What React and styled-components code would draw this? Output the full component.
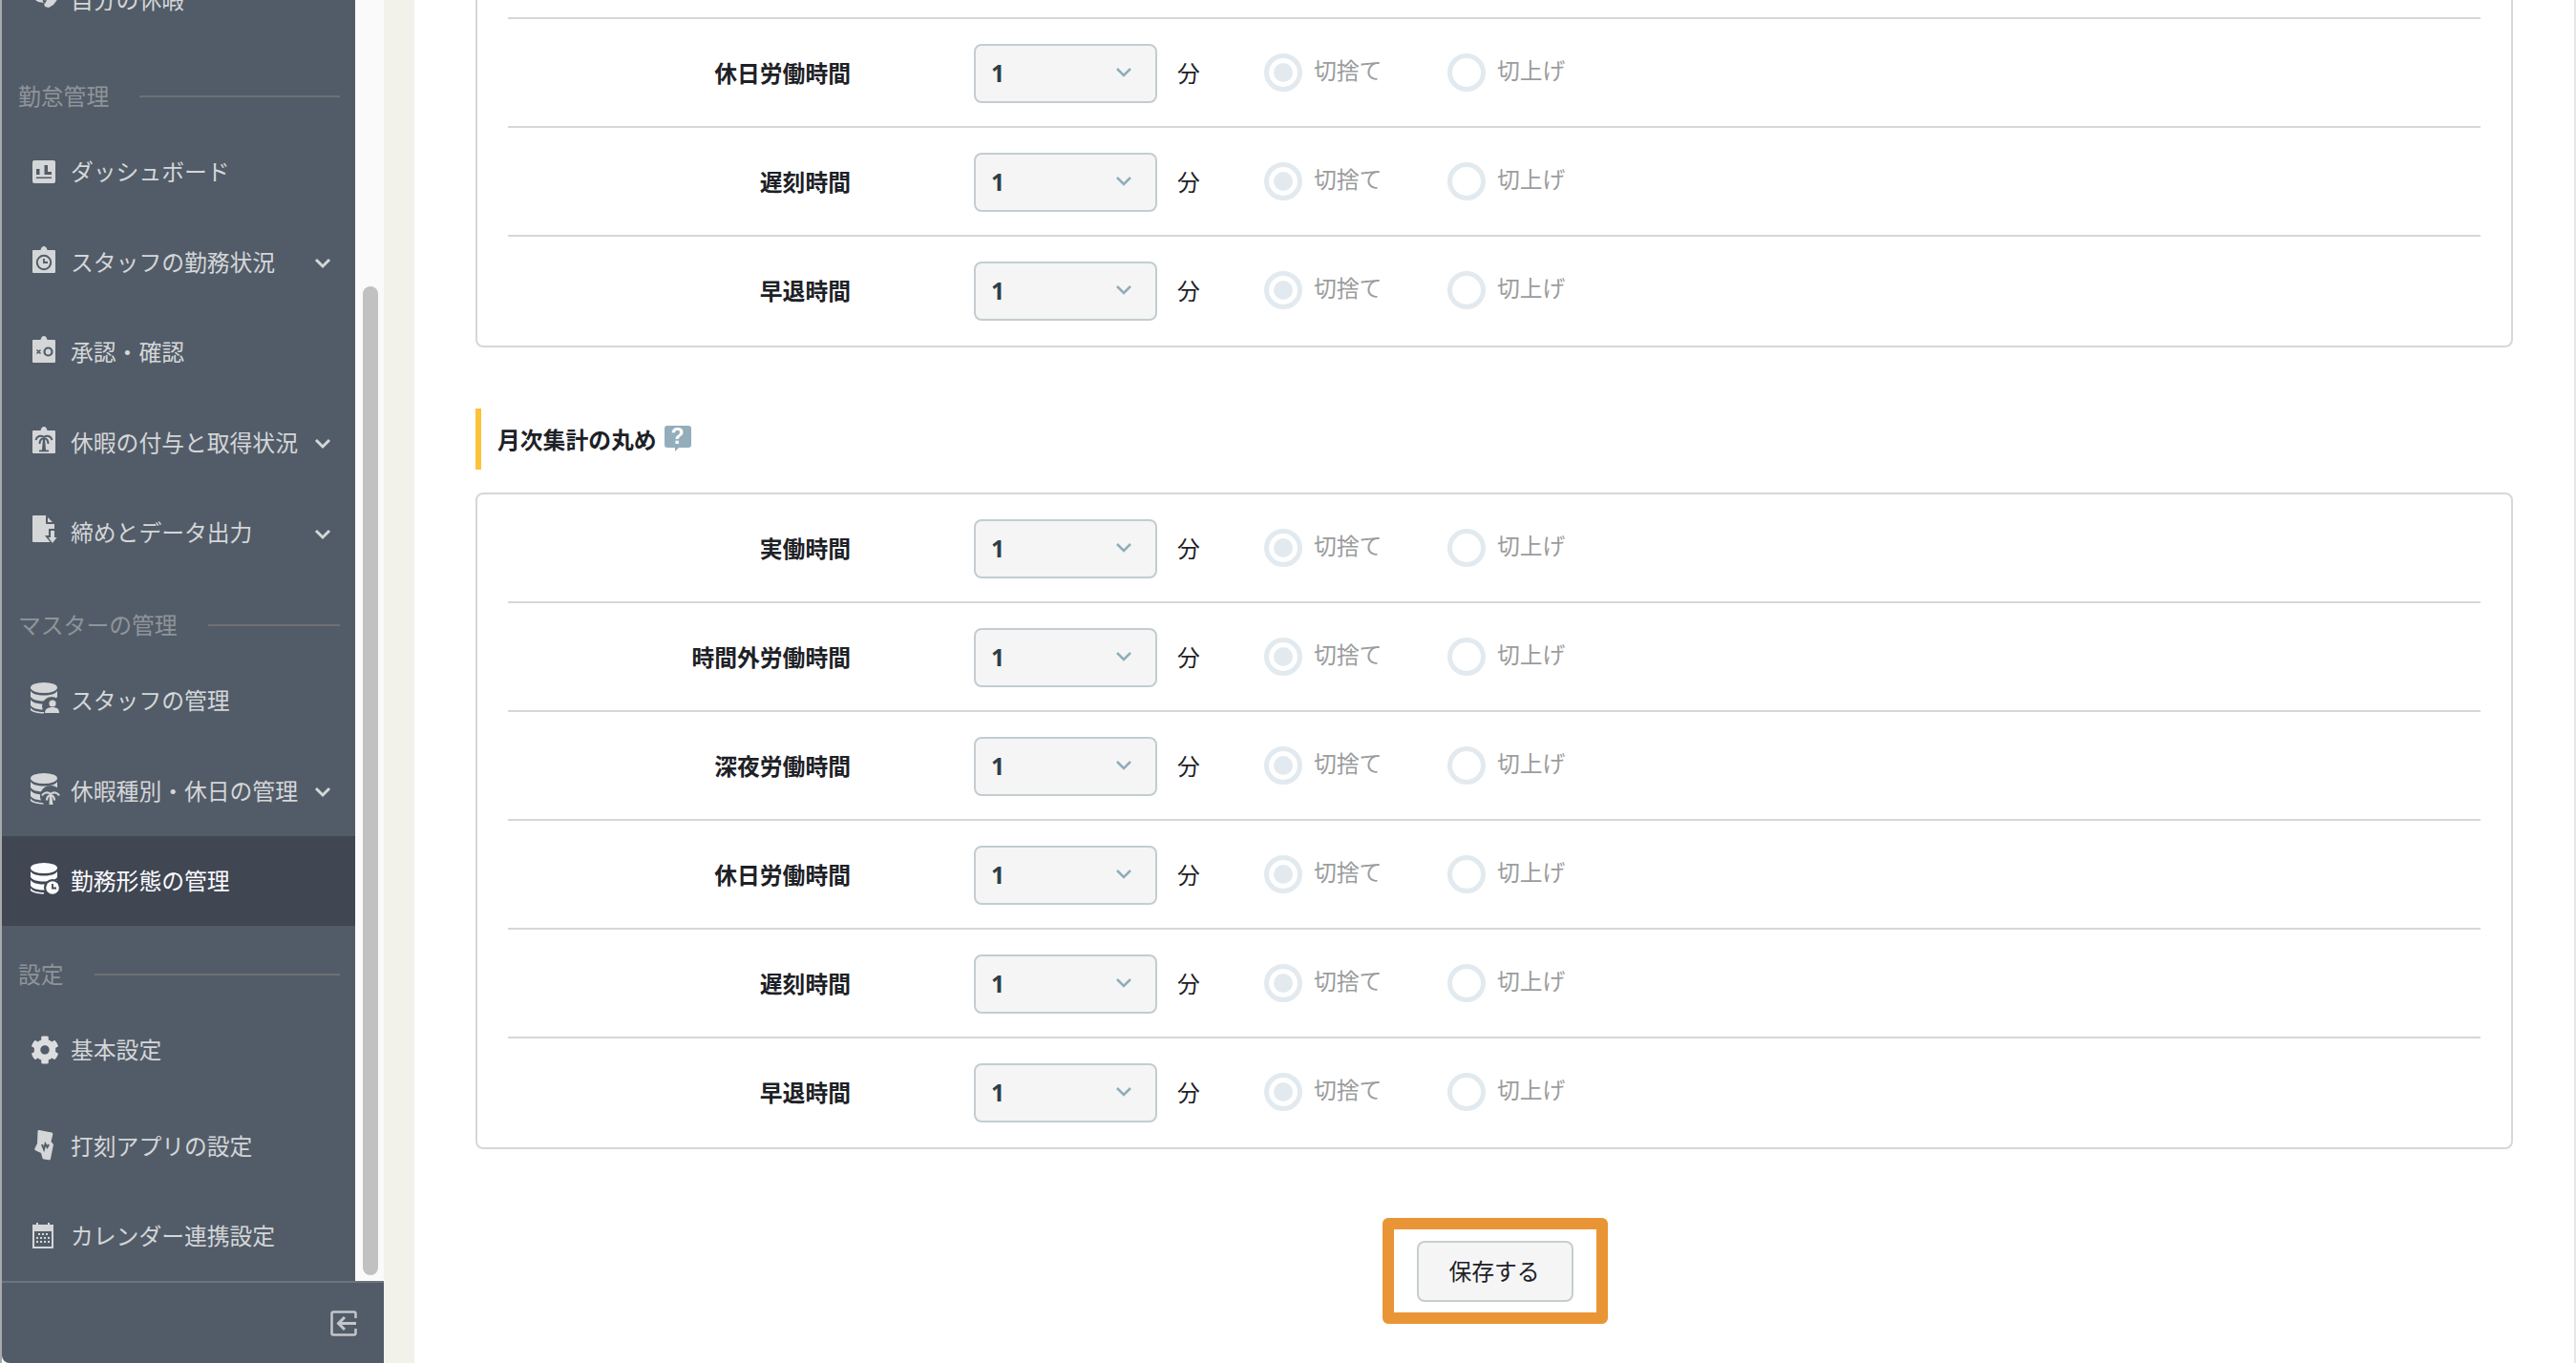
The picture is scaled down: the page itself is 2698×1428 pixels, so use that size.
import React from "react";
import styled, { createGlobalStyle } from "styled-components";
import { FaCog } from "react-icons/fa";

const Global = createGlobalStyle`
  html, body { margin: 0; padding: 0; background: #fff; overflow: hidden; }
  #root { width: 2698px; height: 1428px; }
  * { box-sizing: border-box; }
`;

const FONT = `"Noto Sans CJK JP", "Noto Sans", sans-serif`;

const Page = styled.div`
  display: flex;
  width: 2698px;
  height: 1428px;
  overflow: hidden;
  background: #fff;
  font-family: ${FONT};
  font-size: 23.8px;
`;
const Sidebar = styled.aside`
  width: 402px;
  flex: none;
  display: flex;
  flex-direction: column;
  border-left: 2px solid #a9abab;
  background: #fafafa;
`;
const SideBody = styled.div`
  flex: 1;
  min-height: 0;
  display: flex;
`;
const Nav = styled.nav`
  width: 370px;
  flex: none;
  background: #525c68;
  overflow: hidden;
  color: #d4d6d8;
`;
const NavInner = styled.div`
  margin-top: -47px;
`;
const Track = styled.div`
  flex: 1;
  padding: 300px 6px 6px 8px;
`;
const Thumb = styled.div`
  width: 16px;
  height: 1036px;
  border-radius: 8px;
  background: #c1c1c1;
`;
const SideFoot = styled.div`
  height: 86px;
  flex: none;
  display: flex;
  align-items: center;
  justify-content: flex-end;
  padding: 2px 28px 0 0;
  background: #525c68;
  border-top: 2px solid #6c747e;
  border-bottom-left-radius: 8px;
`;
const SectionHead = styled.div`
  display: flex;
  align-items: center;
  gap: 32px;
  height: 30px;
  margin: ${(p) => p.$top}px 16px ${(p) => p.$bottom}px 17px;
  color: #8f9499;
  white-space: nowrap;
  &::after {
    content: "";
    flex: 1;
    height: 2px;
    background: #6d7074;
  }
`;
const SectionText = styled.span`
  margin-top: -3px;
`;
const Item = styled.div`
  display: flex;
  align-items: center;
  gap: 12px;
  height: ${(p) => p.$h || 94.5}px;
  padding: 0 25px 0 30px;
  white-space: nowrap;
  background: ${(p) => (p.$active ? "#404652" : "transparent")};
  color: ${(p) => (p.$active ? "#fbfbff" : "inherit")};
`;
const NavIcon = styled.svg`
  width: 30px;
  height: 34px;
  flex: none;
  overflow: visible;
`;
const GearIcon = styled(FaCog)`
  width: 30px;
  height: 30px;
  flex: none;
  color: #dcdddf;
`;
const ItemText = styled.span`
  flex: 1;
  margin-top: -3px;
`;
const Chevron = styled.svg`
  width: 18px;
  height: 12px;
  flex: none;
  margin-top: 3px;
`;
const Gutter = styled.div`
  width: 32px;
  flex: none;
  background: #f2f2ea;
`;
const Main = styled.main`
  flex: 1;
  min-width: 0;
  padding: 0 64px;
  border-right: 2px solid #e6e6e6;
  background: #fff;
`;
const MainInner = styled.div`
  margin-top: -96px;
`;
const Card = styled.section`
  border: 2px solid #d7d7d7;
  border-radius: 8px;
  padding: 0 32px;
`;
const Heading = styled.h3`
  display: flex;
  align-items: center;
  gap: 8px;
  height: 64px;
  margin: 64px 0 24px;
  padding-left: 17px;
  border-left: 6px solid #fdc23a;
  font-size: 23.8px;
  font-weight: 700;
  color: #1d2126;
`;
const HeadingText = styled.span`
  margin-top: -2px;
`;
const HelpBubble = styled.span`
  position: relative;
  display: flex;
  align-items: center;
  justify-content: center;
  width: 28px;
  height: 23px;
  margin-top: -5px;
  border-radius: 3px;
  background: #93adbb;
  color: #fff;
  font-family: "Liberation Sans", sans-serif;
  font-size: 23px;
  font-weight: 700;
  &::after {
    content: "";
    position: absolute;
    left: 11px;
    top: 22px;
    border-style: solid;
    border-width: 5px 5px 0 0;
    border-color: #93adbb transparent transparent transparent;
  }
`;
const Row = styled.div`
  display: flex;
  align-items: center;
  height: 114px;
  padding-top: 2px;
  border-bottom: 2px solid ${(p) => (p.$last ? "transparent" : "#d7d7d7")};
`;
const RowLabel = styled.div`
  width: 359px;
  flex: none;
  margin: -3px 129px 0 0;
  text-align: right;
  font-weight: 700;
  color: #1d2126;
  white-space: nowrap;
`;
const SelectBox = styled.div`
  width: 192px;
  height: 62px;
  flex: none;
  display: flex;
  align-items: center;
  justify-content: space-between;
  padding: 0 25px 0 16px;
  border: 2px solid #c3cdd1;
  border-radius: 8px;
  background: #f5f5f5;
  color: #2f3e4a;
  font-family: "Open Sans", sans-serif;
  font-size: 25px;
  font-weight: 700;
`;
const SelectValue = styled.span`
  margin-top: -2px;
`;
const SelectArrow = styled.svg`
  width: 16px;
  height: 10px;
  margin-top: -2px;
`;
const Unit = styled.span`
  width: 24px;
  flex: none;
  margin: -3px 67px 0 21px;
  color: #1d2126;
  white-space: nowrap;
`;
const RadioOption = styled.label`
  display: flex;
  align-items: center;
  gap: 12px;
  width: 192px;
  flex: none;
  color: #9b9c9d;
  white-space: nowrap;
`;
const RadioRing = styled.span`
  width: 40px;
  height: 40px;
  flex: none;
  display: flex;
  align-items: center;
  justify-content: center;
  border: 5px solid #e2eaef;
  border-radius: 50%;
  background: #fff;
  margin-top: -3px;
  &::after {
    content: "";
    width: 20px;
    height: 20px;
    border-radius: 50%;
    background: ${(p) => (p.$on ? "#e2eaef" : "transparent")};
  }
`;
const RadioText = styled.span`
  margin-top: -9px;
`;
const Actions = styled.div`
  display: flex;
  justify-content: center;
  margin-top: 72px;
  padding-left: 2px;
`;
const Highlight = styled.div`
  padding: 12px 24px 11px;
  border: 12px solid #e99535;
  border-radius: 6px;
`;
const SaveButton = styled.button`
  display: block;
  width: 164px;
  height: 64px;
  padding: 0 2px 3px 0;
  border: 2px solid #c6ced1;
  border-radius: 8px;
  background: #f5f5f5;
  color: #1d2126;
  font-family: ${FONT};
  font-size: 23.8px;
`;
const CollapseIcon = styled.svg`
  width: 28px;
  height: 27px;
  margin-top: -2px;
`;

const fill = "#d4d6d8";
const dark = "#525c68";

const Clip = ({ children }) => (
  <NavIcon viewBox="0 0 30 34">
    <path fill={fill} d="M3 4h7.5C11 1.500 12.500 0 14 0s3 1.500 3.500 4H25a1 1 0 0 1 1 1v22a1 1 0 0 1-1 1H3a1 1 0 0 1-1-1V5a1 1 0 0 1 1-1z" />
    {children}
  </NavIcon>
);

const Leaf = () => (
  <NavIcon viewBox="0 0 30 34">
    <path fill={fill} d="M0 15c3-6 8-9 11-8l3 4 4-6 9 2 3 7-6 8-5 3-4-1-1-4-6-1-3-2z" />
    <path fill={dark} d="M12 13l3 5 2-6 1 3-3 6-2-2z" />
  </NavIcon>
);

const Dash = () => (
  <NavIcon viewBox="0 0 30 34">
    <rect x="2" y="5" width="24" height="24" rx="2" fill={fill} />
    <path fill={dark} d="M6 14h3.500v6H6zM14.500 10H18v10h-3.500zM18 17h4v3h-4zM6 22.500h16V24H6z" />
  </NavIcon>
);

const ClockClip = () => (
  <Clip>
    <circle cx="14" cy="17" r="7.200" fill="none" stroke={dark} strokeWidth="2" />
    <path d="M14 13v4h4" fill="none" stroke={dark} strokeWidth="1.800" />
  </Clip>
);

const ApproveClip = () => (
  <Clip>
    <path d="M6.500 14.500l4 4M10.500 14.500l-4 4" stroke={dark} strokeWidth="1.500" />
    <circle cx="18.500" cy="16.500" r="4" fill="none" stroke={dark} strokeWidth="2.200" />
  </Clip>
);

const PalmClip = () => (
  <Clip>
    <path
      d="M14 11C10.500 8.500 6.500 10 5.500 14M14 11c3.500-2.500 7.500-1 8.500 3M14 12c-2.500.5-4.500 2.500-4.500 6M14 12c2.500.5 4.500 2.500 4.500 6"
      fill="none"
      stroke={dark}
      strokeWidth="2"
    />
    <path fill={dark} d="M13 12h2l1 13h-4z" />
    <rect x="9" y="24.500" width="10" height="1.800" fill={dark} />
  </Clip>
);

const ExportDoc = () => (
  <NavIcon viewBox="0 0 30 34">
    <path fill={fill} d="M3-1h13l9 9v19H3a1 1 0 0 1-1-1V0a1 1 0 0 1 1-1z" />
    <path fill={dark} d="M16-1v8a1 1 0 0 0 1 1h8l-1-2-6 0V0z" />
    <path fill={dark} d="M19 13h8v7h4L23 30l-8-10h4z" />
    <path fill={fill} d="M21 15h4v7h2.500L23 28l-4.500-6H21z" />
  </NavIcon>
);

const Db = ({ color = fill, bg = dark, children }) => (
  <NavIcon viewBox="0 0 30 34">
    <ellipse cx="14" cy="3.500" rx="14" ry="5.500" fill={color} />
    <path fill={color} d="M0 7c2 3 7 4.500 14 4.500S26 10 28 7v6c-2 3-7 4.500-14 4.500S2 16 0 13z" />
    <path fill={color} d="M0 16c2 3 7 4.500 14 4.500S26 19 28 16v6c-2 3-7 4.500-14 4.500S2 25 0 22z" />
    <path fill={color} d="M0 24.500c2 3 7 4.500 14 4.500v1.500C7 30.500 2 29 0 27z" />
    {children({ bg, color })}
  </NavIcon>
);

const DbUser = () => (
  <Db>
    {({ bg, color }) => (
      <>
        <circle cx="22" cy="23" r="10" fill={bg} />
        <circle cx="23" cy="20" r="3.600" fill={color} />
        <path fill={color} d="M15 30c0-4 3-6 8-6s7 2 7 6z" />
      </>
    )}
  </Db>
);

const DbPalm = () => (
  <Db>
    {({ bg, color }) => (
      <>
        <circle cx="21" cy="22" r="11" fill={bg} />
        <path fill={color} d="M20 20h2l1.500 11h-4z" />
        <path
          d="M21 20c-3-2.500-7-2-9 1.500M21 20c3-2.500 7-2 9 1.500M21 21c-2 .5-4 2.500-4 5.500M21 21c2 .5 4 2.500 4 5.500"
          fill="none"
          stroke={color}
          strokeWidth="2.200"
        />
      </>
    )}
  </Db>
);

const DbClock = () => (
  <Db color="#fbfbff" bg="#404652">
    {({ bg, color }) => (
      <>
        <circle cx="23" cy="24" r="9" fill={bg} />
        <circle cx="23" cy="24" r="6.800" fill={color} />
        <path d="M23 20v4.500h4" fill="none" stroke={bg} strokeWidth="1.800" />
      </>
    )}
  </Db>
);

const Punch = () => (
  <NavIcon viewBox="0 0 30 34">
    <path fill={fill} d="M9 0l13 2.500c1 .2 1.500 1 1.300 2L21.500 12l2.500 3-3 15c-.2 1-1 1.400-2 1.200L14 30.500c-1-.2-1.500-.8-1.700-1.800L11 24l-5.500-2.500c-1-.5-1.500-1.500-1-2.500l2.500-5L7.500 1c.2-.8.8-1.200 1.500-1z" />
    <path d="M12 15l2 5 1.500-5.500 2 3.500 1.500-3" fill="none" stroke={dark} strokeWidth="2" />
  </NavIcon>
);

const Calendar = () => (
  <NavIcon viewBox="0 0 30 34">
    <path fill={fill} d="M2 5h4V3h2v2h10V3h2v2h4v25H2z" />
    <rect x="4" y="12" width="18" height="16" fill={dark} />
    <path fill={fill} d="M8 14h2v2H8zM12 14h2v2h-2zM16 14h2v2h-2zM6 18h2v2H6zM10 18h2v2h-2zM14 18h2v2h-2zM18 18h2v2h-2zM6 22h2v2H6zM10 22h2v2h-2zM14 22h2v2h-2zM18 22h2v2h-2z" />
  </NavIcon>
);

const Down = () => (
  <Chevron viewBox="0 0 18 12">
    <path d="M2 2l7 7 7-7" fill="none" stroke="#d4d6d8" strokeWidth="3" />
  </Chevron>
);

const Control = () => (
  <>
    <SelectBox>
      <SelectValue>1</SelectValue>
      <SelectArrow viewBox="0 0 16 10">
        <path d="M1 1l7 7 7-7" fill="none" stroke="#8fadb9" strokeWidth="2.500" />
      </SelectArrow>
    </SelectBox>
    <Unit>分</Unit>
    <RadioOption>
      <RadioRing $on />
      <RadioText>切捨て</RadioText>
    </RadioOption>
    <RadioOption>
      <RadioRing />
      <RadioText>切上げ</RadioText>
    </RadioOption>
  </>
);

const Rows = ({ labels }) =>
  labels.map((l, i) => (
    <Row key={l} $last={i === labels.length - 1}>
      <RowLabel>{l}</RowLabel>
      <Control />
    </Row>
  ));

export default function App() {
  return (
    <Page>
      <Global />
      <Sidebar>
        <SideBody>
          <Nav>
            <NavInner>
              <Item><Leaf /><ItemText>自分の休暇</ItemText></Item>
              <SectionHead $top={38} $bottom={17.5}><SectionText>勤怠管理</SectionText></SectionHead>
              <Item><Dash /><ItemText>ダッシュボード</ItemText></Item>
              <Item><ClockClip /><ItemText>スタッフの勤務状況</ItemText><Down /></Item>
              <Item><ApproveClip /><ItemText>承認・確認</ItemText></Item>
              <Item><PalmClip /><ItemText>休暇の付与と取得状況</ItemText><Down /></Item>
              <Item><ExportDoc /><ItemText>締めとデータ出力</ItemText><Down /></Item>
              <SectionHead $top={34} $bottom={17.5}><SectionText>マスターの管理</SectionText></SectionHead>
              <Item><DbUser /><ItemText>スタッフの管理</ItemText></Item>
              <Item><DbPalm /><ItemText>休暇種別・休日の管理</ItemText><Down /></Item>
              <Item $active $h={93.5}><DbClock /><ItemText>勤務形態の管理</ItemText></Item>
              <SectionHead $top={36.5} $bottom={17}><SectionText>設定</SectionText></SectionHead>
              <Item><GearIcon /><ItemText>基本設定</ItemText></Item>
              <Item $h={106}><Punch /><ItemText>打刻アプリの設定</ItemText></Item>
              <Item $h={82}><Calendar /><ItemText>カレンダー連携設定</ItemText></Item>
            </NavInner>
          </Nav>
          <Track><Thumb /></Track>
        </SideBody>
        <SideFoot>
          <CollapseIcon viewBox="0 0 28 27">
            <path d="M26.500 8V3a1.500 1.500 0 0 0-1.500-1.500H3A1.500 1.500 0 0 0 1.500 3v21A1.500 1.500 0 0 0 3 25.500h22a1.500 1.500 0 0 0 1.500-1.500v-5" fill="none" stroke="#c4c6c9" strokeWidth="2.500" />
            <path d="M27 13.500H9M15 7l-6.500 6.500L15 20" fill="none" stroke="#c4c6c9" strokeWidth="3" />
          </CollapseIcon>
        </SideFoot>
      </Sidebar>
      <Gutter />
      <Main>
        <MainInner>
          <Card>
            <Rows labels={["深夜労働時間", "休日労働時間", "遅刻時間", "早退時間"]} />
          </Card>
          <Heading>
            <HeadingText>月次集計の丸め</HeadingText>
            <HelpBubble>?</HelpBubble>
          </Heading>
          <Card>
            <Rows labels={["実働時間", "時間外労働時間", "深夜労働時間", "休日労働時間", "遅刻時間", "早退時間"]} />
          </Card>
          <Actions>
            <Highlight>
              <SaveButton>保存する</SaveButton>
            </Highlight>
          </Actions>
        </MainInner>
      </Main>
    </Page>
  );
}
